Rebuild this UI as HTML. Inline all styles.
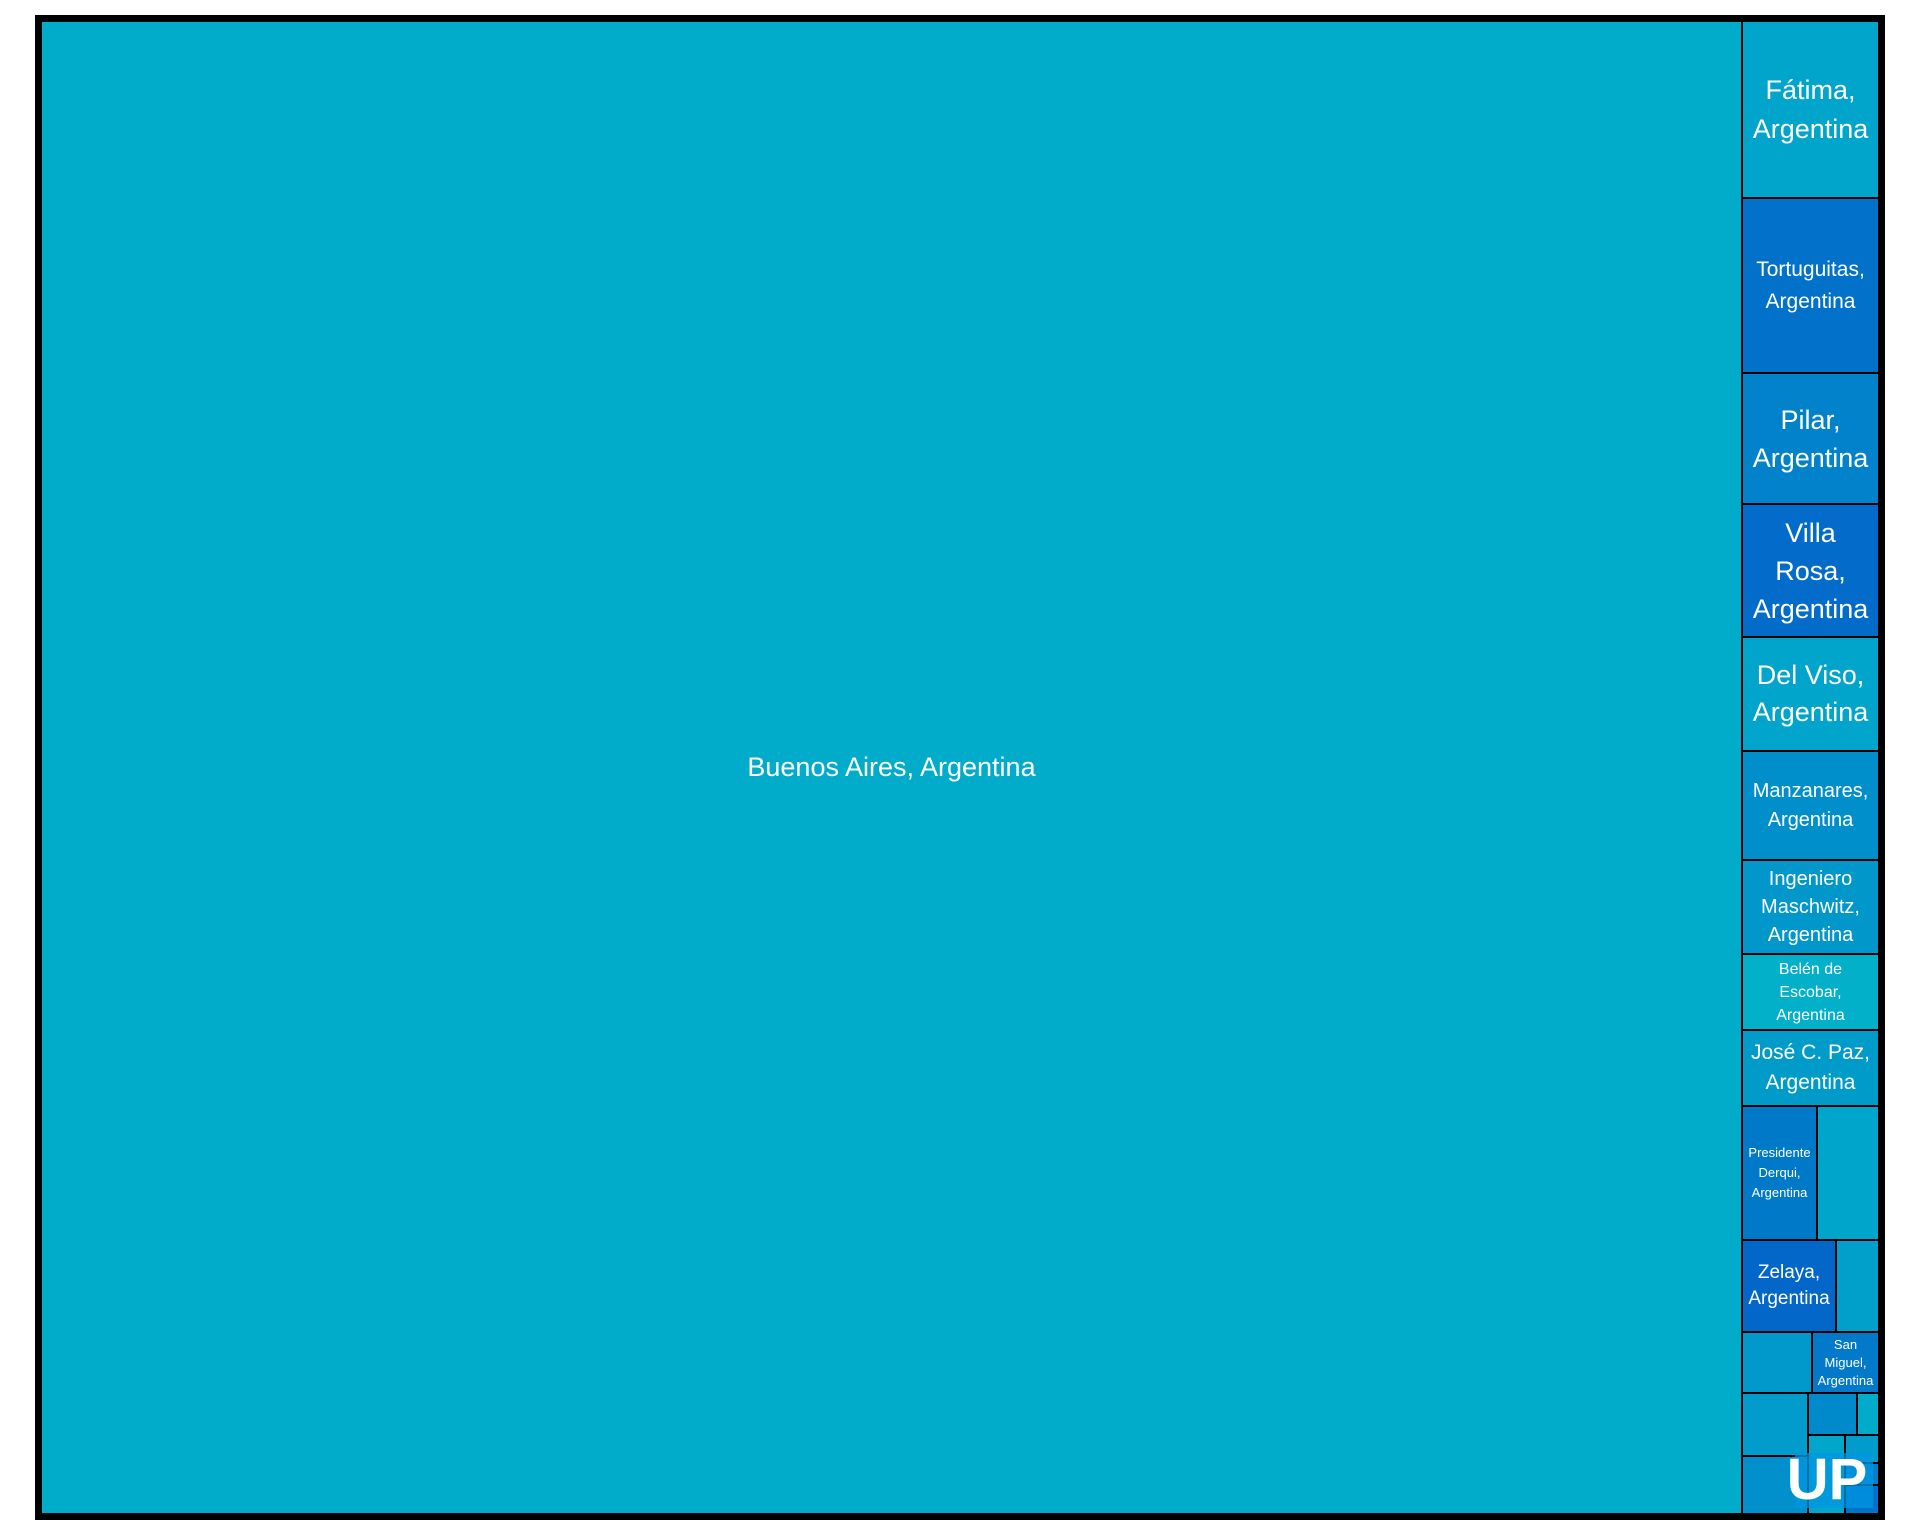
<!DOCTYPE html>
<html><head><meta charset="utf-8"><style>
html,body{margin:0;padding:0;background:#fff;width:1920px;height:1536px;overflow:hidden}
.frame{position:absolute;left:35px;top:15px;width:1838px;height:1493px;border:6px solid #000;background:#000}
.c{position:absolute;box-sizing:border-box;border:1px solid #000;display:flex;align-items:center;justify-content:center;text-align:center;color:#fff;font-family:"Liberation Sans",sans-serif}
</style></head><body>
<div class="frame"></div>
<div class="c" style="left:41px;top:21px;width:1701px;height:1493px;background:#01abca;font-size:27px">Buenos Aires, Argentina</div>
<div class="c" style="left:1742px;top:21px;width:137px;height:177px;background:#01a4cb;font-size:27px;line-height:39px">Fátima,<br>Argentina</div>
<div class="c" style="left:1742px;top:198px;width:137px;height:175px;background:#0271c9;font-size:21px;line-height:32px">Tortuguitas,<br>Argentina</div>
<div class="c" style="left:1742px;top:373px;width:137px;height:131px;background:#0282ca;font-size:27px;line-height:38px">Pilar,<br>Argentina</div>
<div class="c" style="left:1742px;top:504px;width:137px;height:133px;background:#036bca;font-size:27px;line-height:38px">Villa<br>Rosa,<br>Argentina</div>
<div class="c" style="left:1742px;top:637px;width:137px;height:114px;background:#01a5cb;font-size:27px;line-height:37px">Del Viso,<br>Argentina</div>
<div class="c" style="left:1742px;top:751px;width:137px;height:109px;background:#018fcb;font-size:20px;line-height:29px">Manzanares,<br>Argentina</div>
<div class="c" style="left:1742px;top:860px;width:137px;height:94px;background:#0197cb;font-size:20px;line-height:28px">Ingeniero<br>Maschwitz,<br>Argentina</div>
<div class="c" style="left:1742px;top:954px;width:137px;height:76px;background:#02b0ca;font-size:16px;line-height:23px">Belén de<br>Escobar,<br>Argentina</div>
<div class="c" style="left:1742px;top:1030px;width:137px;height:76px;background:#019bca;font-size:21px;line-height:30px">José C. Paz,<br>Argentina</div>
<div class="c" style="left:1742px;top:1106px;width:75px;height:134px;background:#0179c9;font-size:13px;line-height:20px">Presidente<br>Derqui,<br>Argentina</div>
<div class="c" style="left:1817px;top:1106px;width:62px;height:134px;background:#00a5cb"></div>
<div class="c" style="left:1742px;top:1240px;width:94px;height:92px;background:#0267c9;font-size:19px;line-height:26px">Zelaya,<br>Argentina</div>
<div class="c" style="left:1836px;top:1240px;width:43px;height:92px;background:#01a0ca"></div>
<div class="c" style="left:1742px;top:1332px;width:70px;height:61px;background:#0198cb"></div>
<div class="c" style="left:1812px;top:1332px;width:67px;height:61px;background:#0279c9;font-size:13px;line-height:18px">San<br>Miguel,<br>Argentina</div>
<div class="c" style="left:1742px;top:1393px;width:66px;height:63px;background:#019ccb"></div>
<div class="c" style="left:1808px;top:1393px;width:49px;height:42px;background:#018acb"></div>
<div class="c" style="left:1857px;top:1393px;width:22px;height:42px;background:#01acca"></div>
<div class="c" style="left:1742px;top:1456px;width:66px;height:58px;background:#0190cb"></div>
<div class="c" style="left:1808px;top:1435px;width:37px;height:79px;background:#01a6cb"></div>
<div class="c" style="left:1845px;top:1435px;width:34px;height:28px;background:#019ccb"></div>
<div class="c" style="left:1845px;top:1463px;width:34px;height:22px;background:#0282ca"></div>
<div class="c" style="left:1845px;top:1485px;width:34px;height:29px;background:#0272c9"></div>
<div style="position:absolute;left:1795px;top:1453px;width:78px;height:55px;background:rgba(0,150,225,0.75)"></div>
<div style="position:absolute;left:1782px;top:1447px;width:90px;height:66px;color:#fff;font-family:'Liberation Sans',sans-serif;font-weight:bold;font-size:58px;line-height:66px;text-align:center;letter-spacing:0px">UP</div>
</body></html>
